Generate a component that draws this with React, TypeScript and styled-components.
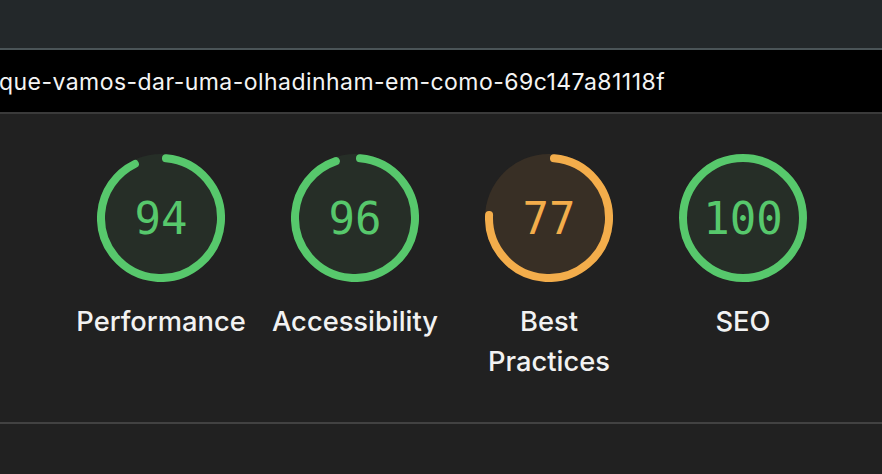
import React from 'react'
import styled, { createGlobalStyle } from 'styled-components'

const GlobalStyle = createGlobalStyle`
  html, body {
    margin: 0;
    padding: 0;
    background: #212121;
  }
  body {
    width: 882px;
    height: 474px;
    overflow: hidden;
    font-family: Inter, 'Liberation Sans', sans-serif;
  }
`

const Page = styled.div`
  display: flex;
  flex-direction: column;
  width: 882px;
  height: 474px;
  background: #212121;
`

const TopBar = styled.div`
  height: 48px;
  background: #23282a;
  border-bottom: 2px solid #4a5457;
`

const UrlBar = styled.div`
  height: 62px;
  background: #000;
  border-bottom: 2px solid #3a3a3a;
  display: flex;
  align-items: center;
  overflow: hidden;
  white-space: nowrap;
`

const UrlText = styled.span`
  color: #f4f4f4;
  font-family: Inter, 'Liberation Sans', sans-serif;
  font-size: 23px;
  letter-spacing: 0.45px;
  margin-left: -1px;
  padding-top: 2px;
`

const Scores = styled.div`
  display: flex;
  padding: 40px 0 0 64px;
  height: 268px;
  border-bottom: 2px solid #424242;
`

const Score = styled.div`
  width: 194px;
  display: flex;
  flex-direction: column;
  align-items: center;
`

const GaugeWrap = styled.div`
  position: relative;
  width: 128px;
  height: 128px;
`

const GaugeValue = styled.div<{ $color: string }>`
  position: absolute;
  inset: 0;
  display: flex;
  align-items: center;
  justify-content: center;
  color: ${(p) => p.$color};
  font-family: 'DejaVu Sans Mono', monospace;
  font-size: 44px;
  padding-top: 1px;
`

const Label = styled.div`
  margin-top: 20px;
  color: #f2f2f2;
  font-size: 27.3px;
  font-weight: 500;
  line-height: 40px;
  text-align: center;
  width: 172px;
`

type Item = { label: string; value: number }

const items: Item[] = [
  { label: 'Performance', value: 94 },
  { label: 'Accessibility', value: 96 },
  { label: 'Best Practices', value: 77 },
  { label: 'SEO', value: 100 },
]

const palette = (v: number) =>
  v >= 90
    ? { stroke: '#57c86c', fill: '#262e27' }
    : { stroke: '#f3ad4b', fill: '#382f25' }

const Gauge = ({ value }: { value: number }) => {
  const c = palette(value)
  const r = 60
  const circ = 2 * Math.PI * r
  const gap = value >= 100 ? 0 : 10
  const len = Math.max(0, (value / 100) * circ - gap)
  return (
    <GaugeWrap>
      <svg width="128" height="128" viewBox="0 0 128 128">
        <circle cx="64" cy="64" r="64" fill={c.fill} />
        <circle
          cx="64"
          cy="64"
          r={r}
          fill="none"
          stroke={c.stroke}
          strokeWidth="8"
          strokeLinecap={value >= 100 ? 'butt' : 'round'}
          strokeDasharray={value >= 100 ? undefined : `${len} ${circ}`}
          transform={`rotate(${-90 + (gap / 2 / circ) * 360} 64 64)`}
        />
      </svg>
      <GaugeValue $color={c.stroke}>{value}</GaugeValue>
    </GaugeWrap>
  )
}

const App = () => (
  <Page>
    <GlobalStyle />
    <TopBar />
    <UrlBar>
      <UrlText>que-vamos-dar-uma-olhadinham-em-como-69c147a81118f</UrlText>
    </UrlBar>
    <Scores>
      {items.map((it) => (
        <Score key={it.label}>
          <Gauge value={it.value} />
          <Label>{it.label}</Label>
        </Score>
      ))}
    </Scores>
  </Page>
)

export default App
